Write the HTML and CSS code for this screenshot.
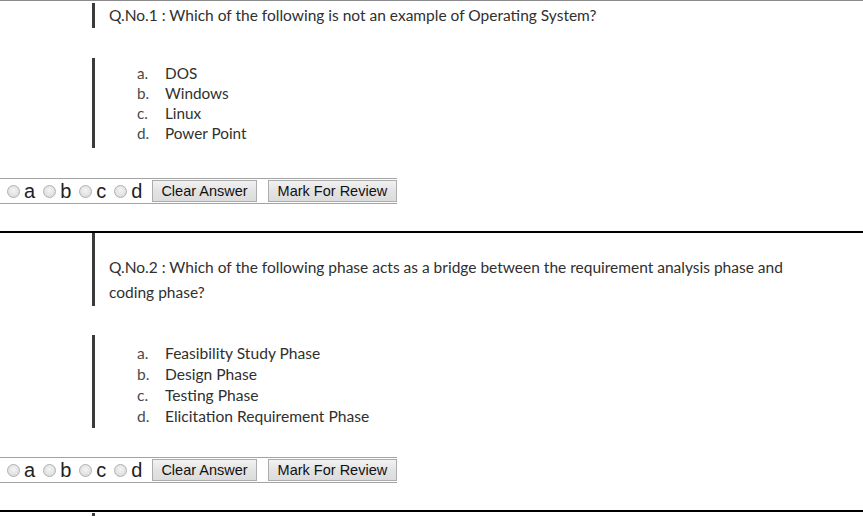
FILE: index.html
```html
<!DOCTYPE html>
<html lang="en">
<head>
<meta charset="utf-8">
<title>Online Test</title>
<link rel="stylesheet" href="styles.css">
</head>
<body>
<div class="quiz">
  <section class="question">
    <div class="q-head q-head--first">
      <p class="q-text">Q.No.1 : Which of the following is not an example of Operating System?</p>
    </div>
    <ol class="options">
      <li><span class="marker">a.</span><span>DOS</span></li>
      <li><span class="marker">b.</span><span>Windows</span></li>
      <li><span class="marker">c.</span><span>Linux</span></li>
      <li><span class="marker">d.</span><span>Power Point</span></li>
    </ol>
    <form class="answer-row">
      <label class="choice"><input type="radio" name="q1" value="a"><span>a</span></label>
      <label class="choice"><input type="radio" name="q1" value="b"><span>b</span></label>
      <label class="choice"><input type="radio" name="q1" value="c"><span>c</span></label>
      <label class="choice"><input type="radio" name="q1" value="d"><span>d</span></label>
      <button type="button" class="btn btn--clear">Clear Answer</button>
      <button type="button" class="btn btn--review">Mark For Review</button>
    </form>
  </section>
  <hr class="sep">
  <section class="question">
    <div class="q-head q-head--spaced">
      <p class="q-text">Q.No.2 : Which of the following phase acts as a bridge between the requirement analysis phase and coding phase?</p>
    </div>
    <ol class="options options--tall">
      <li><span class="marker">a.</span><span>Feasibility Study Phase</span></li>
      <li><span class="marker">b.</span><span>Design Phase</span></li>
      <li><span class="marker">c.</span><span>Testing Phase</span></li>
      <li><span class="marker">d.</span><span>Elicitation Requirement Phase</span></li>
    </ol>
    <form class="answer-row">
      <label class="choice"><input type="radio" name="q2" value="a"><span>a</span></label>
      <label class="choice"><input type="radio" name="q2" value="b"><span>b</span></label>
      <label class="choice"><input type="radio" name="q2" value="c"><span>c</span></label>
      <label class="choice"><input type="radio" name="q2" value="d"><span>d</span></label>
      <button type="button" class="btn btn--clear">Clear Answer</button>
      <button type="button" class="btn btn--review">Mark For Review</button>
    </form>
  </section>
  <hr class="sep">
  <section class="question">
    <div class="q-head q-head--next"></div>
  </section>
</div>
</body>
</html>
```

FILE: styles.css
```css
html, body {
  margin: 0;
  padding: 0;
  background: #ffffff;
}

body {
  font-family: "Lato", "Open Sans", sans-serif;
  color: #333333;
  overflow: hidden;
}

.quiz {
  border-top: 1px solid #8a8a8a;
}

.q-head {
  margin-left: 92px;
  border-left: 3px solid #3a3a3a;
  padding-left: 14px;
}

.q-head--first {
  margin-top: 2px;
}

.q-head--spaced {
  padding-top: 22px;
  padding-bottom: 1px;
}

.q-head--next {
  margin-top: 1px;
  height: 30px;
}

.q-text {
  margin: 0;
  max-width: 690px;
  font-size: 15.5px;
  line-height: 25px;
  color: #303030;
}

.options {
  list-style: none;
  margin: 30px 0 0 92px;
  padding: 5px 0 5px 42px;
  border-left: 3px solid #3a3a3a;
  font-size: 15.3px;
  line-height: 20px;
  color: #303030;
}

.options--tall {
  margin-top: 29px;
  padding-top: 8px;
  padding-bottom: 1px;
  font-size: 15.6px;
  line-height: 21px;
}

.options li {
  display: flex;
}

.options .marker {
  width: 28px;
  color: #4a4a4a;
}

.answer-row {
  display: flex;
  align-items: center;
  width: fit-content;
  margin: 30px 0 0 0;
  padding: 1px 0 1px 7px;
  border-top: 1px solid #a3a3a3;
  border-bottom: 1px solid #a3a3a3;
  font-family: "Liberation Sans", Arial, sans-serif;
}

.options--tall + .answer-row {
  margin-top: 29px;
}

.choice {
  display: inline-flex;
  align-items: center;
  gap: 4px;
  margin-right: 8px;
  font-size: 20px;
  line-height: 22px;
  color: #222222;
}

.choice input {
  appearance: none;
  -webkit-appearance: none;
  width: 13px;
  height: 13px;
  margin: 0;
  border: 1px solid #b0b0b0;
  border-radius: 50%;
  background: radial-gradient(circle at 50% 40%, #f4f4f4 0%, #e2e2e2 60%, #d6d6d6 100%);
  box-sizing: border-box;
}

.btn {
  height: 22px;
  padding: 0 9px;
  margin: 0;
  border: 1px solid #acacac;
  border-radius: 0;
  background: linear-gradient(#f2f2f2, #e3e3e3 50%, #dcdcdc);
  font-family: "Liberation Sans", Arial, sans-serif;
  font-size: 14.5px;
  color: #111111;
  box-sizing: border-box;
}

.btn--clear {
  margin-left: 2px;
  padding: 0 8px;
}

.btn--review {
  margin-left: 11px;
}

.sep {
  margin: 27px 0 0 0;
  border: 0;
  border-top: 2px solid #000000;
  height: 0;
}
```
